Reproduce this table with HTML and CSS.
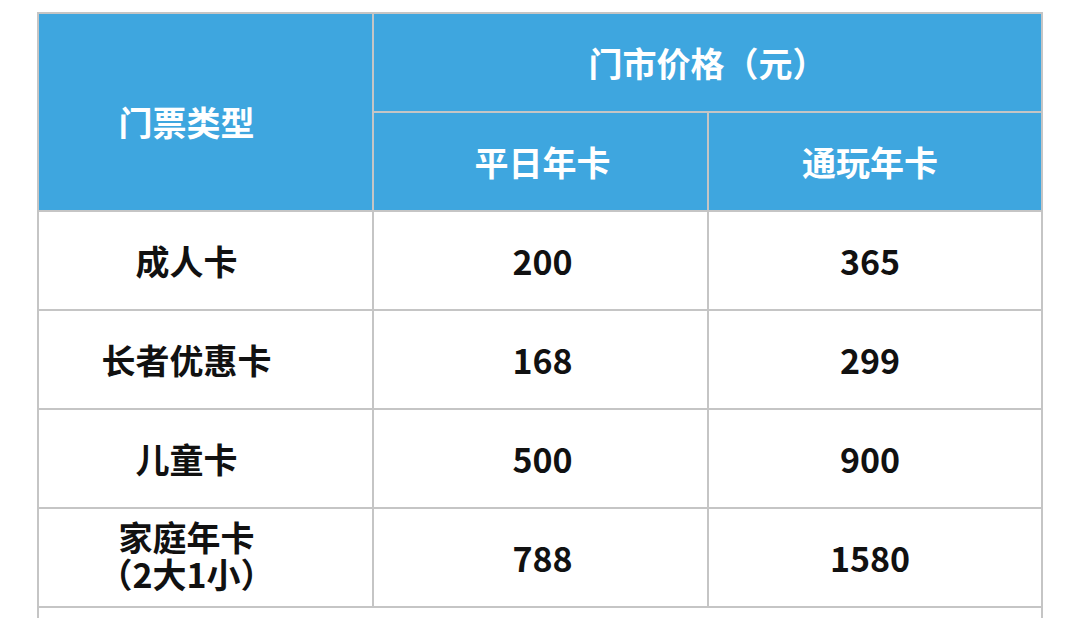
FILE: index.html
```html
<!DOCTYPE html>
<html lang="zh-CN">
<head>
<meta charset="utf-8">
<title>门票价格</title>
<link rel="stylesheet" href="styles.css">
</head>
<body>
<div class="price-table">
  <div class="cell head head-type">门票类型</div>
  <div class="cell head head-group">门市价格（元）</div>
  <div class="cell head col2">平日年卡</div>
  <div class="cell head col3">通玩年卡</div>

  <div class="cell col1">成人卡</div>
  <div class="cell col2">200</div>
  <div class="cell col3">365</div>

  <div class="cell col1">长者优惠卡</div>
  <div class="cell col2">168</div>
  <div class="cell col3">299</div>

  <div class="cell col1">儿童卡</div>
  <div class="cell col2">500</div>
  <div class="cell col3">900</div>

  <div class="cell col1 two-line">家庭年卡<br>（2大1小）</div>
  <div class="cell col2">788</div>
  <div class="cell col3">1580</div>

  <div class="cell note"></div>
</div>
</body>
</html>
```

FILE: styles.css
```css
html {
  overflow: hidden;
}

body {
  margin: 0;
  padding: 12px 0 0 37px;
  background: #ffffff;
  font-family: "Noto Sans CJK SC", "Noto Sans", sans-serif;
}

.price-table {
  width: 1006px;
  box-sizing: border-box;
  display: grid;
  grid-template-columns: 333px 333px 332px;
  grid-auto-rows: 97px;
  gap: 2px;
  padding: 2px;
  background: #c5c5c5;
}

.cell {
  display: flex;
  align-items: center;
  justify-content: center;
  text-align: center;
  background: #ffffff;
  color: #111111;
  font-size: 34px;
  font-weight: 700;
  line-height: 1.1;
}

.head {
  background: #3ea6df;
  color: #ffffff;
}

.head-type {
  grid-row: span 2;
  padding: 20px 38px 0 0;
}

.head-group {
  grid-column: span 2;
  padding-top: 0;
}

.col1 {
  padding-right: 38px;
}

.col2 {
  padding-left: 4px;
}

.col3 {
  padding-right: 10px;
}

.two-line {
  line-height: 37px;
  padding-bottom: 6px;
}

.note {
  grid-column: span 3;
}
```
